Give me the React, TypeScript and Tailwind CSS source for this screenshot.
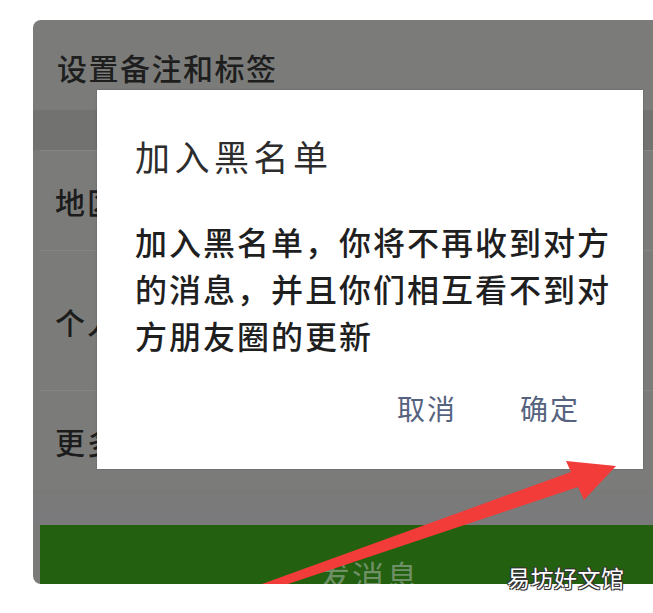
const font = "font-['Noto_Sans_CJK_SC','Noto_Sans',sans-serif]";

const Row = ({ label, height }: { label: string; height: string }) => (
	<div className={`${height} ml-[7px] flex items-center border-t border-[#858684] pl-[15px]`}>
		<span className="text-[30px] font-medium leading-none tracking-[2px] text-[#1c1c1c]">{label}</span>
	</div>
);

const App = () => {
	return (
		<div className={`relative h-[613px] w-[653px] overflow-hidden bg-white ${font}`}>
			{/* dimmed profile page behind the dialog */}
			<div className="ml-[33px] mt-[20px] flex h-[564px] flex-col overflow-hidden rounded-l-[8px] bg-[#7b7c7a]">
				<div className="flex h-[90px] items-center pl-[24px] pt-[4px]">
					<span className="text-[30px] font-medium leading-none tracking-[1.5px] text-[#1e1e1e]">设置备注和标签</span>
				</div>
				<div className="h-[40px] bg-[#727371]" />
				<Row label="地区" height="h-[100px]" />
				<Row label="个人相册" height="h-[140px]" />
				<Row label="更多" height="h-[100px]" />
				<div className="h-[35px] bg-gradient-to-b from-[#797a78] to-[#7a7a7d]" />
				<div className="ml-[7px] flex h-[59px] items-end bg-[#23600f] pl-[278px]">
					<span className="translate-y-[7px] text-[32px] leading-none tracking-[2px] text-[#6f8f66]">发消息</span>
				</div>
			</div>

			{/* dialog */}
			<div className="absolute left-[97px] top-[90px] flex h-[379px] w-[546px] flex-col bg-white pl-[38px] shadow-[0_0_2px_rgba(0,0,0,0.25)]">
				<div className="pt-[48px] text-[35px] leading-none tracking-[4.5px] text-[#2d2d2d]">加入黑名单</div>
				<p className="mt-[45px] pr-[20px] text-[32px] font-medium leading-[47px] tracking-[2px] text-[#1f1f1f]">
					加入黑名单，你将不再收到对方的消息，并且你们相互看不到对方朋友圈的更新
				</p>
				<div className="mt-[35px] flex justify-end gap-[63px] pr-[63px] text-[28px] leading-none tracking-[2px] text-[#56637f]">
					<span>取消</span>
					<span>确定</span>
				</div>
			</div>

			{/* red annotation arrow */}
			<svg className="pointer-events-none absolute left-0 top-0" width="653" height="613" viewBox="0 0 653 613">
				<polygon
					points="262,584 571,472 566,461 616,466 584,500 578,487 288,584"
					fill="#f23c3a"
				/>
			</svg>

			{/* watermark */}
			<div className="absolute left-[507px] top-[566px] text-[23px] leading-none tracking-[0.5px] text-white [text-shadow:1px_1px_0_#333,-1px_-1px_0_#333,1px_-1px_0_#333,-1px_1px_0_#333]">
				易坊好文馆
			</div>
		</div>
	);
};

export default App;
